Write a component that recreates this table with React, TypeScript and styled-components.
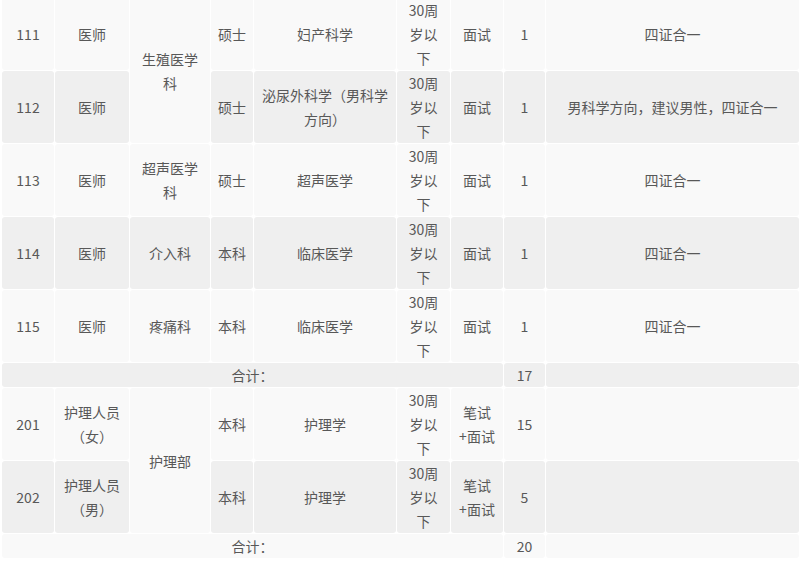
import styled, { createGlobalStyle } from "styled-components"

const GlobalStyle = createGlobalStyle`
    html, body {
        margin: 0;
        padding: 0;
        background: #ffffff;
    }
    body {
        font-family: "Noto Sans CJK SC", "Noto Sans", sans-serif;
        overflow: hidden;
    }
`

const Page = styled.div`
    width: 800px;
    height: 575px;
    overflow: hidden;
    padding-left: 1px;
    box-sizing: border-box;
`

const StyledTable = styled.table`
    width: 799px;
    margin-top: -3px;
    table-layout: fixed;
    border-collapse: separate;
    border-spacing: 1px;
    color: #585858;
    font-size: 14px;
    line-height: 24px;
    text-spacing-trim: space-all;
`

const Row = styled.tr<{ $alt: boolean }>`
    td {
        background: ${(p) => (p.$alt ? "#efefef" : "#f9f9f9")};
    }
`

const Cell = styled.td`
    padding: 0 6px;
    border-radius: 3px;
    text-align: center;
    vertical-align: middle;
    box-sizing: border-box;
`

const colWidths = [52, 74, 80, 42, 142, 53, 52, 41, 253]

type Post = {
    code: string
    title: string
    dept?: { name: string; span: number }
    degree: string
    major: string
    mode: string
    count: string
    note: string
}

const AGE = "30周岁以下"

const rows: (Post | { total: string })[] = [
    { code: "111", title: "医师", dept: { name: "生殖医学科", span: 2 }, degree: "硕士", major: "妇产科学", mode: "面试", count: "1", note: "四证合一" },
    { code: "112", title: "医师", degree: "硕士", major: "泌尿外科学（男科学方向）", mode: "面试", count: "1", note: "男科学方向，建议男性，四证合一" },
    { code: "113", title: "医师", dept: { name: "超声医学科", span: 1 }, degree: "硕士", major: "超声医学", mode: "面试", count: "1", note: "四证合一" },
    { code: "114", title: "医师", dept: { name: "介入科", span: 1 }, degree: "本科", major: "临床医学", mode: "面试", count: "1", note: "四证合一" },
    { code: "115", title: "医师", dept: { name: "疼痛科", span: 1 }, degree: "本科", major: "临床医学", mode: "面试", count: "1", note: "四证合一" },
    { total: "17" },
    { code: "201", title: "护理人员（女）", dept: { name: "护理部", span: 2 }, degree: "本科", major: "护理学", mode: "笔试+面试", count: "15", note: "" },
    { code: "202", title: "护理人员（男）", degree: "本科", major: "护理学", mode: "笔试+面试", count: "5", note: "" },
    { total: "20" },
]

export default function App() {
    return (
        <Page>
            <GlobalStyle />
            <StyledTable>
                <colgroup>
                    {colWidths.map((w, i) => (
                        <col key={i} style={{ width: w }} />
                    ))}
                </colgroup>
                <tbody>
                    {rows.map((r, i) =>
                        "total" in r ? (
                            <Row key={i} $alt={i % 2 === 1}>
                                <Cell colSpan={7}>合计：</Cell>
                                <Cell>{r.total}</Cell>
                                <Cell></Cell>
                            </Row>
                        ) : (
                            <Row key={i} $alt={i % 2 === 1}>
                                <Cell>{r.code}</Cell>
                                <Cell>{r.title}</Cell>
                                {r.dept && <Cell rowSpan={r.dept.span}>{r.dept.name}</Cell>}
                                <Cell>{r.degree}</Cell>
                                <Cell>{r.major}</Cell>
                                <Cell>{AGE}</Cell>
                                <Cell>{r.mode}</Cell>
                                <Cell>{r.count}</Cell>
                                <Cell>{r.note}</Cell>
                            </Row>
                        )
                    )}
                </tbody>
            </StyledTable>
        </Page>
    )
}
